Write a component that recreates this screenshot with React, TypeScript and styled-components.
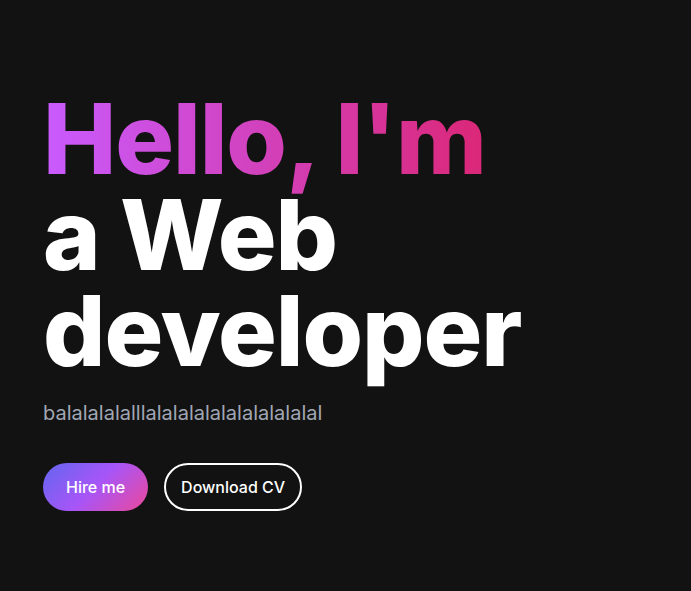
import React from "react";
import styled, { createGlobalStyle } from "styled-components";

const Global = createGlobalStyle`
  html, body {
    margin: 0;
    padding: 0;
    background: #121212;
    font-family: Inter, "Noto Sans", sans-serif;
  }
`;

const Page = styled.main`
  min-height: 591px;
  box-sizing: border-box;
  padding: 91px 43px 0;
  display: flex;
  flex-direction: column;
  align-items: flex-start;
`;

const Heading = styled.h1`
  margin: 0;
  font-size: 98px;
  line-height: 96px;
  font-weight: 800;
  letter-spacing: -1.1px;
  color: #ffffff;
`;

const GradientText = styled.span`
  background: linear-gradient(90deg, #c95bff 0%, #db2777 100%);
  -webkit-background-clip: text;
  background-clip: text;
  color: transparent;
`;

const Subtitle = styled.p`
  margin: 20px 0 0;
  font-size: 20px;
  line-height: 28px;
  color: #a0a7b2;
`;

const Actions = styled.div`
  display: flex;
  gap: 16px;
  margin-top: 36px;
`;

const Button = styled.button<{ $variant: "primary" | "outline" }>`
  height: 48px;
  border-radius: 999px;
  font-family: Inter, "Noto Sans", sans-serif;
  font-size: 16px;
  font-weight: 500;
  color: #ffffff;
  cursor: pointer;
  box-sizing: border-box;
  border: ${(p) => (p.$variant === "outline" ? "2px solid #ffffff" : "none")};
  background: ${(p) =>
    p.$variant === "primary"
      ? "linear-gradient(135deg, #6366f1 0%, #a855f7 50%, #ec4899 100%)"
      : "transparent"};
  padding: ${(p) => (p.$variant === "primary" ? "0 23px" : "0 15px")};
`;

export default function App() {
  return (
    <>
      <Global />
      <Page>
        <Heading>
          <GradientText>Hello, I'm</GradientText>
          <br />
          a Web
          <br />
          developer
        </Heading>
        <Subtitle>balalalalalllalalalalalalalalalalal</Subtitle>
        <Actions>
          <Button $variant="primary">Hire me</Button>
          <Button $variant="outline">Download CV</Button>
        </Actions>
      </Page>
    </>
  );
}
